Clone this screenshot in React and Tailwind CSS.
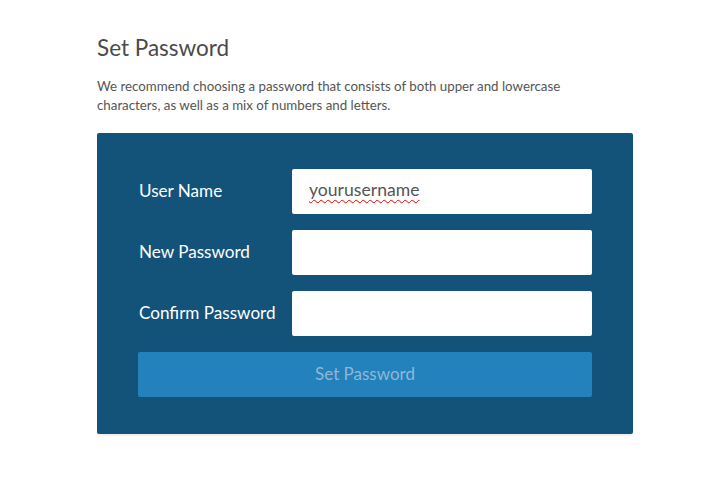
export default function App() {
  const rows = [
    { label: "User Name", value: "yourusername" },
    { label: "New Password", value: "" },
    { label: "Confirm Password", value: "" },
  ];
  return (
    <div className="w-[717px] h-[496px] bg-white" style={{ fontFamily: "Lato, 'Liberation Sans', sans-serif" }}>
      <div className="pl-[97px] pt-[34px] w-[633px]">
        <h1 className="text-[22.5px] leading-[28px] text-[#4a4a4a] font-normal">Set Password</h1>
        <p className="mt-[15px] text-[13.3px] leading-[19px] text-[#555] w-[480px]">
          We recommend choosing a password that consists of both upper and lowercase characters, as well as a mix of numbers and letters.
        </p>
        <div className="mt-[18px] w-[536px] h-[301px] bg-[#13537a] rounded-[2px] shadow-[0_2px_1px_rgba(0,0,0,0.06)] pt-[36px] pl-[41px] pr-[41px] flex flex-col gap-[16px]">
          {rows.map((r) => (
            <div key={r.label} className="flex items-center">
              <div className="w-[154px] pl-[1px] pb-[2px] text-[17.1px] text-white">{r.label}</div>
              <div className="w-[300px] h-[45px] bg-white rounded-[2px] flex items-center pl-[17px] pb-[2px] text-[17.6px] text-[#555]">
                {r.value && (
                  <span className="underline decoration-wavy decoration-[#e00] decoration-[1px] underline-offset-[3px]">{r.value}</span>
                )}
              </div>
            </div>
          ))}
          <div className="w-[454px] h-[45px] bg-[#2381bc] rounded-[2px] flex items-center justify-center pb-[2px] text-[17px] text-[#8fb8d6]">
            Set Password
          </div>
        </div>
      </div>
    </div>
  );
}
